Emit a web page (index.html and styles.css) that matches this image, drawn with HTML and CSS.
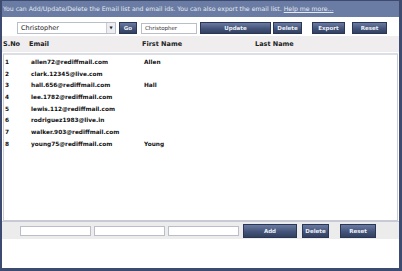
FILE: index.html
```html
<!DOCTYPE html>
<html lang="en">
<head>
    <meta charset="UTF-8">
    <title>Email List</title>
    <link rel="stylesheet" href="styles.css">
</head>
<body>

<div class="frame">
    <!-- Info bar -->
    <div class="info-bar">
        You can Add/Update/Delete the Email list and email ids. You can also export the email list. <a href="#">Help me more...</a>
    </div>

    <!-- Top toolbar -->
    <div class="toolbar">
        <div class="select-box">
            <span>Christopher</span>
            <span class="arrow">&#9660;</span>
        </div>
        <button class="btn btn-go">Go</button>
        <input class="field field-name" type="text" value="Christopher">
        <button class="btn btn-update">Update</button>
        <button class="btn btn-delete">Delete</button>
        <button class="btn btn-export">Export</button>
        <button class="btn btn-reset">Reset</button>
    </div>

    <!-- Column headers -->
    <div class="row head">
        <span>S.No</span>
        <span>Email</span>
        <span>First Name</span>
        <span class="last">Last Name</span>
    </div>

    <!-- Email list -->
    <div class="list">
        <div class="row"><span>1</span><span>allen72@rediffmail.com</span><span>Allen</span><span></span></div>
        <div class="row"><span>2</span><span>clark.12345@live.com</span><span></span><span></span></div>
        <div class="row"><span>3</span><span>hall.656@rediffmail.com</span><span>Hall</span><span></span></div>
        <div class="row"><span>4</span><span>lee.1782@rediffmail.com</span><span></span><span></span></div>
        <div class="row"><span>5</span><span>lewis.112@rediffmail.com</span><span></span><span></span></div>
        <div class="row"><span>6</span><span>rodriguez1983@live.in</span><span></span><span></span></div>
        <div class="row"><span>7</span><span>walker.903@rediffmail.com</span><span></span><span></span></div>
        <div class="row"><span>8</span><span>young75@rediffmail.com</span><span>Young</span><span></span></div>
    </div>

    <!-- Add bar -->
    <div class="add-bar">
        <input class="field field-add" type="text">
        <input class="field field-add" type="text">
        <input class="field field-add" type="text">
        <button class="btn btn-add">Add</button>
        <button class="btn btn-del2">Delete</button>
        <button class="btn btn-reset2">Reset</button>
    </div>
</div>

</body>
</html>
```

FILE: styles.css
```css
/* General Styling */
body {
    margin: 0;
    font-family: 'DejaVu Sans', Verdana, sans-serif;
    background-color: #3c4b6f;
}

.frame {
    width: 397px;
    height: 267px;
    margin-top: 1px;
    margin-left: 2px;
    background: white;
    display: flex;
    flex-direction: column;
}

.info-bar {
    height: 16px;
    line-height: 16px;
    background-color: #6a7ca3;
    color: #e4e9f2;
    font-size: 6.2px;
    padding-left: 1px;
    white-space: nowrap;
    overflow: hidden;
}

.info-bar a {
    color: #e4e9f2;
}

/* Toolbar */
.toolbar {
    display: flex;
    align-items: center;
    height: 12px;
    margin-top: 5px;
    padding-left: 15px;
}

.select-box {
    box-sizing: border-box;
    width: 99px;
    height: 12px;
    border: 1px solid #b9bec8;
    display: flex;
    align-items: center;
    justify-content: space-between;
    font-size: 6.5px;
    color: #222;
    padding-left: 3px;
}

.select-box .arrow {
    font-size: 4px;
    width: 8px;
    height: 10px;
    line-height: 10px;
    text-align: center;
    background: #eceef2;
    border-left: 1px solid #c7cbd3;
}

.field {
    box-sizing: border-box;
    border: 1px solid #b9bec8;
    margin: 0;
    padding: 0 0 0 3px;
    font-family: 'DejaVu Sans', Verdana, sans-serif;
    font-size: 5.5px;
    color: #333;
    outline: none;
}

.field-name {
    width: 56px;
    height: 11px;
    margin-left: 4px;
}

/* Buttons */
.btn {
    box-sizing: border-box;
    height: 12px;
    padding: 0;
    border: 1px solid #2a3656;
    background: linear-gradient(#6a7aa0, #44547a 55%, #33415f);
    color: #eef1f7;
    font-family: 'DejaVu Sans', Verdana, sans-serif;
    font-size: 5.5px;
    font-weight: bold;
    cursor: pointer;
}

.btn-go {
    width: 18px;
    margin-left: 3px;
}

.btn-update {
    width: 71px;
    margin-left: 3px;
}

.btn-delete {
    width: 29px;
    margin-left: 2px;
}

.btn-export {
    width: 33px;
    margin-left: 10px;
}

.btn-reset {
    width: 35px;
    margin-left: 7px;
}

/* Table rows */
.row {
    display: grid;
    grid-template-columns: 26px 113px 113px 1fr;
    align-items: center;
    height: 11.7px;
    padding-left: 1px;
    font-size: 5.8px;
    font-weight: bold;
    color: #111;
    white-space: nowrap;
}

.head {
    height: 16px;
    margin-top: 2px;
    padding-left: 1px;
    background-color: #efedee;
    font-size: 6.5px;
    color: #222;
}

.list {
    height: 164px;
    margin: 1px 1px 0 1px;
    padding-top: 1px;
    border: 1px solid #c8cbd3;
    border-top: 2px solid #dcdee5;
}

/* Add bar */
.add-bar {
    display: flex;
    align-items: center;
    height: 17px;
    padding-left: 18px;
    background-color: #ececec;
    border-top: 1px solid #c6cad4;
}

.field-add {
    width: 71px;
    height: 10px;
    margin-right: 3px;
}

.btn-add {
    width: 54px;
    height: 14px;
    margin-left: 1px;
}

.btn-del2 {
    width: 27px;
    height: 14px;
    margin-left: 5px;
}

.btn-reset2 {
    width: 36px;
    height: 14px;
    margin-left: 11px;
}
```
